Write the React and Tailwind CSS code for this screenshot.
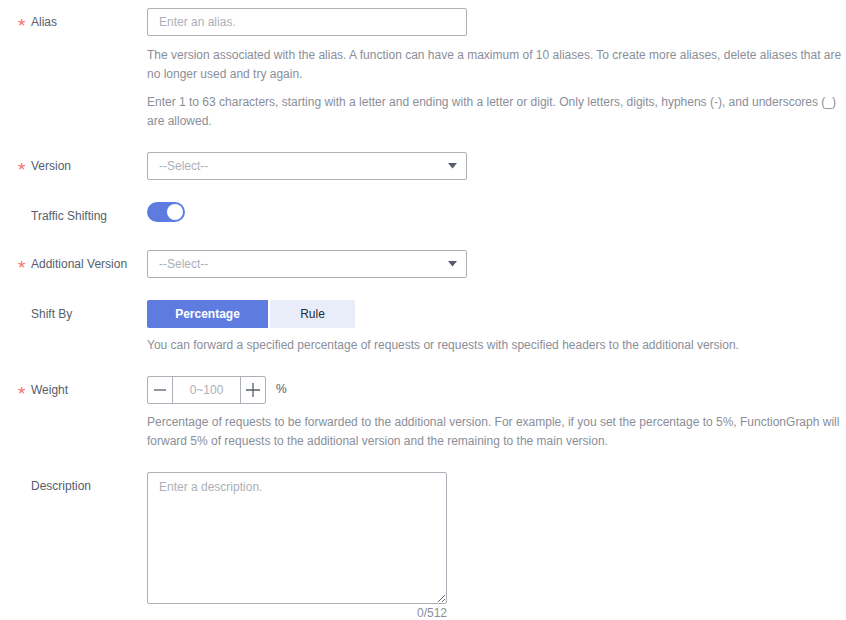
import React from "react";

const font = { fontFamily: '"Liberation Sans", Arial, sans-serif' };

function Label({ required, children, className = "" }) {
  return (
    <div className={`w-[147px] shrink-0 flex items-center h-[28px] pl-[18px] ${className}`}>
      <span className={`w-[13px] text-[#f66f6a] text-[19px] leading-none pt-[7px] ${required ? "" : "invisible"}`}>*</span>
      <span className="text-[12px] text-[#575d6c]">{children}</span>
    </div>
  );
}

function Help({ children, className = "" }) {
  return <p className={`text-[12px] leading-[19px] text-[#8a8e99] ${className}`}>{children}</p>;
}

function Select() {
  return (
    <div className="w-[320px] h-[28px] border border-[#adb0b8] rounded-[2px] flex items-center justify-between pl-[11px] pr-[9px]">
      <span className="text-[12px] text-[#adb0b8]">--Select--</span>
      <svg width="9" height="6" viewBox="0 0 9 6"><path d="M0 0H9L4.5 5.5Z" fill="#575d6c" /></svg>
    </div>
  );
}

export default function App() {
  return (
    <div className="w-[846px] h-[620px] bg-white pt-[8px]" style={font}>
      {/* Alias */}
      <div className="flex">
        <Label required>Alias</Label>
        <div className="flex-1">
          <div className="w-[320px] h-[28px] border border-[#adb0b8] rounded-[2px] flex items-center pl-[11px]">
            <span className="text-[12px] text-[#adb0b8]">Enter an alias.</span>
          </div>
          <Help className="mt-[10px]">
            The version associated with the alias. A function can have a maximum of 10 aliases. To create more aliases, delete aliases that are no longer used and try again.
          </Help>
          <Help className="mt-[9px]">
            Enter 1 to 63 characters, starting with a letter and ending with a letter or digit. Only letters, digits, hyphens (-), and underscores (_) are allowed.
          </Help>
        </div>
      </div>

      {/* Version */}
      <div className="flex mt-[21px]">
        <Label required>Version</Label>
        <Select />
      </div>

      {/* Traffic Shifting */}
      <div className="flex mt-[22px] h-[26px]">
        <div className="w-[147px] shrink-0 flex items-center h-[26px] pl-[31px]">
          <span className="text-[12px] text-[#575d6c] pt-[1px]">Traffic Shifting</span>
        </div>
        <div className="w-[38px] h-[20px] rounded-full bg-[#5e7ce0] flex items-center justify-end pr-[2px]">
          <div className="w-[16px] h-[16px] rounded-full bg-white" />
        </div>
      </div>

      {/* Additional Version */}
      <div className="flex mt-[22px]">
        <Label required>Additional Version</Label>
        <Select />
      </div>

      {/* Shift By */}
      <div className="flex mt-[22px]">
        <Label>Shift By</Label>
        <div className="flex-1">
          <div className="flex gap-[2px]">
            <div className="w-[121px] h-[28px] bg-[#5e7ce0] rounded-l-[2px] flex items-center justify-center text-[12px] font-bold text-white">
              Percentage
            </div>
            <div className="w-[85px] h-[28px] bg-[#e9edfa] rounded-r-[2px] flex items-center justify-center text-[12px] text-[#252b3a]">
              Rule
            </div>
          </div>
          <Help className="mt-[8px]">
            You can forward a specified percentage of requests or requests with specified headers to the additional version.
          </Help>
        </div>
      </div>

      {/* Weight */}
      <div className="flex mt-[21px]">
        <Label required>Weight</Label>
        <div className="flex-1">
          <div className="flex items-center">
            <div className="flex h-[28px] border border-[#adb0b8] rounded-[2px]">
              <div className="w-[25px] flex items-center justify-center border-r border-[#adb0b8]">
                <svg width="12" height="12" viewBox="0 0 12 12"><path d="M0 6H12" stroke="#575d6c" strokeWidth="1.3" /></svg>
              </div>
              <div className="w-[67px] flex items-center justify-center text-[12px] text-[#adb0b8]">0~100</div>
              <div className="w-[25px] flex items-center justify-center border-l border-[#adb0b8]">
                <svg width="14" height="14" viewBox="0 0 14 14"><path d="M0 7H14M7 0V14" stroke="#575d6c" strokeWidth="1.3" /></svg>
              </div>
            </div>
            <span className="ml-[10px] text-[12px] text-[#575d6c] -mt-[2px]">%</span>
          </div>
          <Help className="mt-[9px]">
            Percentage of requests to be forwarded to the additional version. For example, if you set the percentage to 5%, FunctionGraph will forward 5% of requests to the additional version and the remaining to the main version.
          </Help>
        </div>
      </div>

      {/* Description */}
      <div className="flex mt-[21px]">
        <Label>Description</Label>
        <div className="w-[300px]">
          <textarea
            className="block w-[300px] h-[132px] border border-[#adb0b8] rounded-[2px] px-[11px] py-[5px] text-[12px] leading-[18px] text-[#252b3a] placeholder:text-[#adb0b8] outline-none resize-y"
            style={font}
            placeholder="Enter a description."
          />
          <div className="text-right text-[12px] leading-[18px] text-[#8a8e99]">0/512</div>
        </div>
      </div>
    </div>
  );
}
